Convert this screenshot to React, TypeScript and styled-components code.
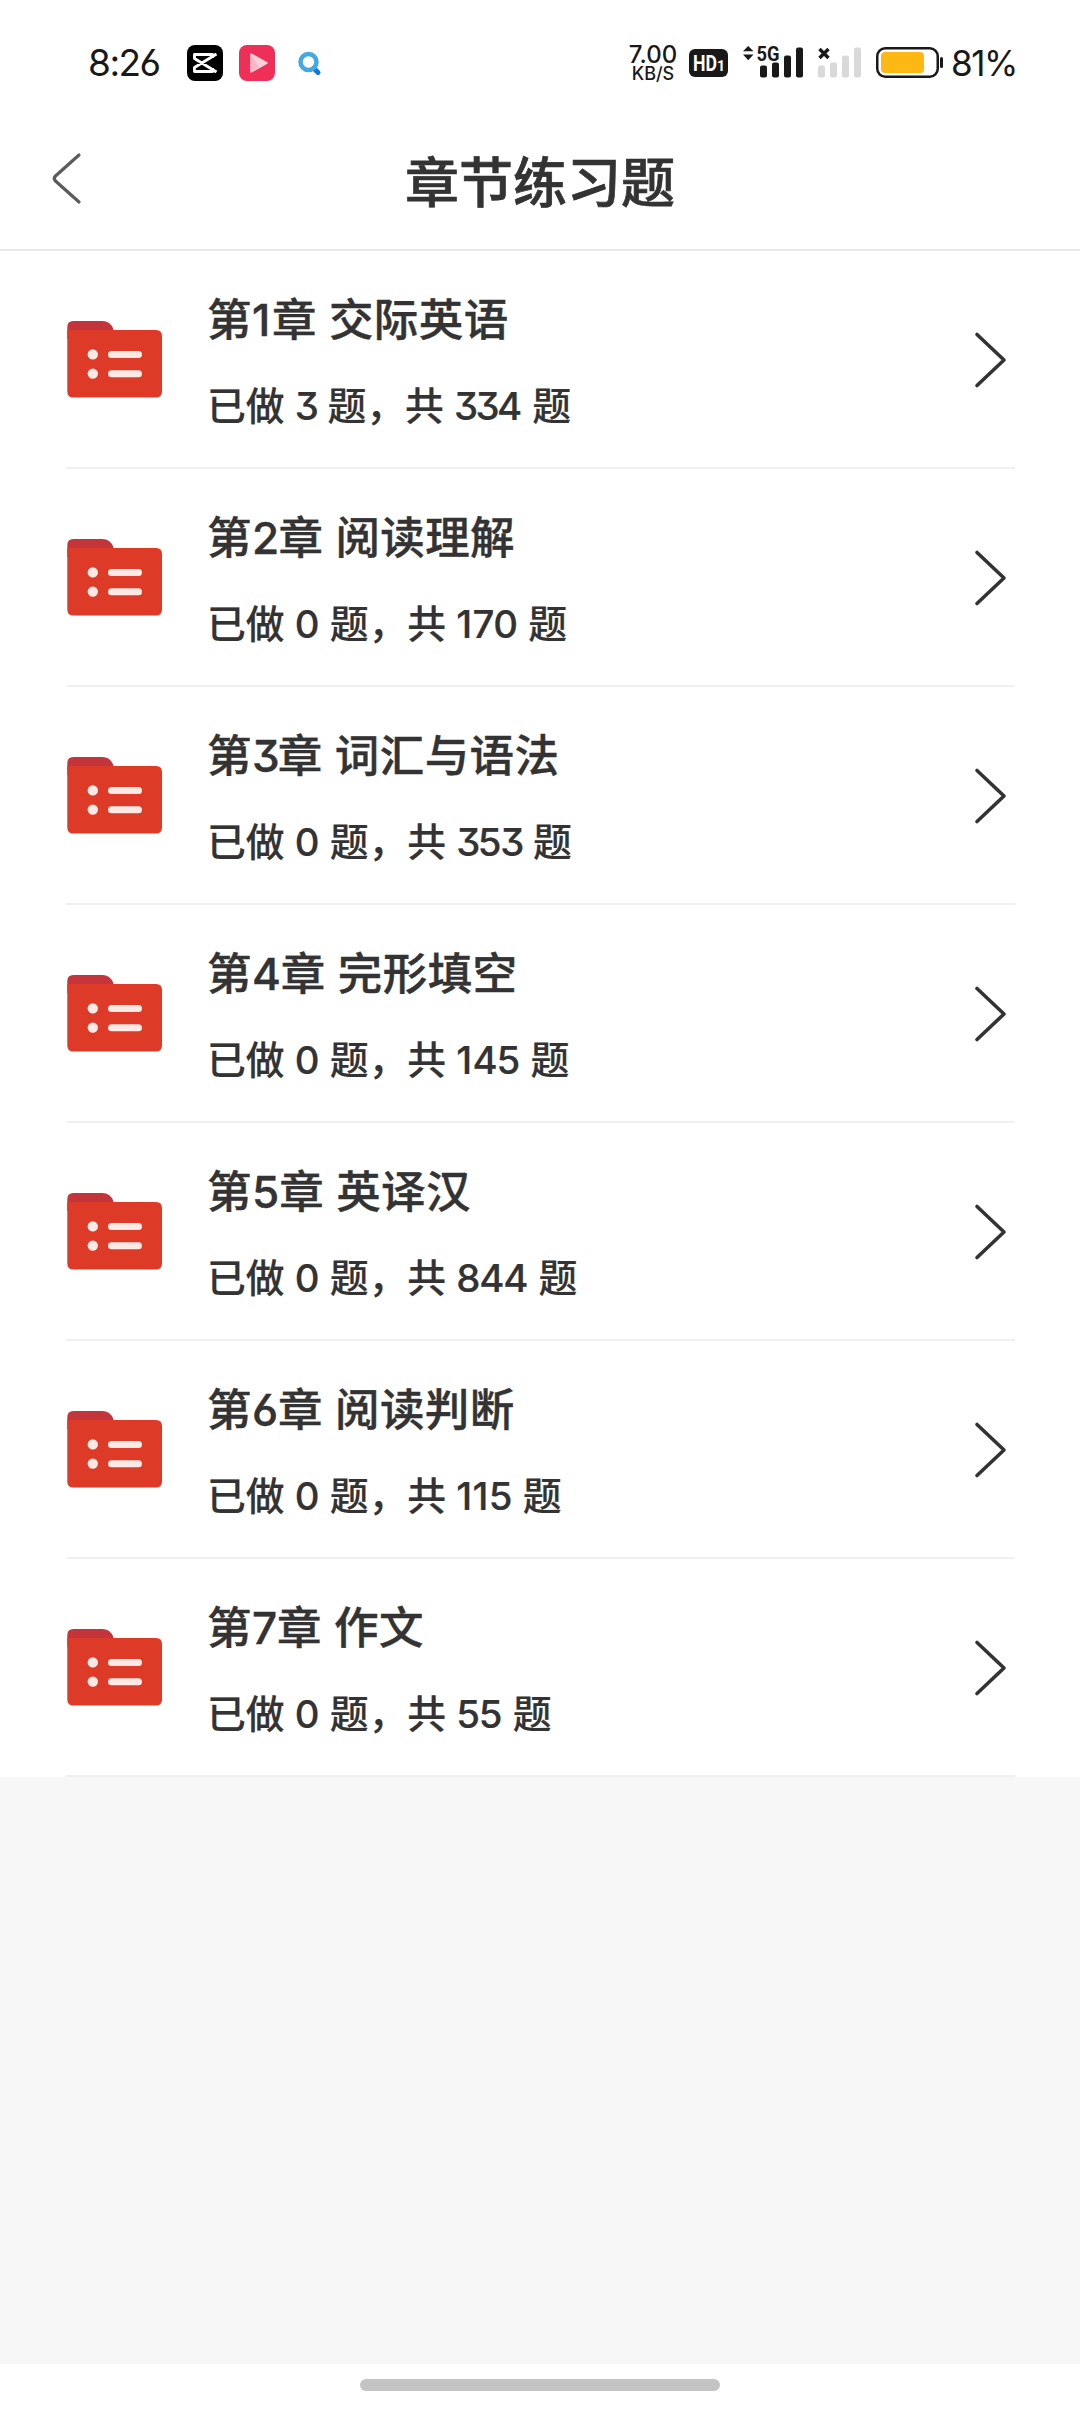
import React from 'react';
import styled, { createGlobalStyle } from 'styled-components';

const Global = createGlobalStyle`
  * { box-sizing: border-box; }
  body { margin: 0; background: #fff; }
`;

const CJK = `'Noto Sans CJK SC', sans-serif`;
const LATIN = `Inter, 'Noto Sans CJK SC', sans-serif`;

const Screen = styled.div`
  width: 1080px;
  height: 2412px;
  display: flex;
  flex-direction: column;
  background: #f7f7f7;
  color: #333;
  font-family: ${CJK};
`;

const StatusBar = styled.div`
  height: 125px;
  padding: 0 64px 0 88px;
  display: flex;
  align-items: center;
  background: #fff;
  color: #191919;
  font-family: ${LATIN};
  flex: none;
`;

const Clock = styled.span`
  width: 98px;
  font-size: 37px;
  line-height: 40px;
  letter-spacing: -1.5px;
  white-space: nowrap;
  font-feature-settings: 'cv03', 'cv09';
`;

const AppIcon = styled.svg<{ $gap: number }>`
  width: 36px;
  height: 36px;
  margin-left: ${(p) => p.$gap}px;
  flex: none;
`;

const Spacer = styled.div`
  flex: 1;
`;

const Speed = styled.div`
  width: 50px;
  margin-right: 11px;
  padding-top: 3px;
  display: flex;
  flex-direction: column;
  align-items: center;
  white-space: nowrap;
`;

const SpeedValue = styled.span`
  font-size: 24px;
  line-height: 19px;
  font-weight: 500;
`;

const SpeedUnit = styled.span`
  font-size: 18px;
  line-height: 19px;
  font-weight: 500;
`;

const HdBadge = styled.svg`
  width: 39px;
  height: 28px;
  margin-right: 13px;
  flex: none;
`;

const Signal = styled.svg<{ $gap?: number }>`
  height: 52px;
  margin-left: ${(p) => p.$gap ?? 0}px;
  flex: none;
`;

const Battery = styled.svg`
  width: 68px;
  height: 34px;
  margin-left: 15px;
  flex: none;
`;

const Percent = styled.span`
  width: 65px;
  margin-left: 7px;
  font-size: 35px;
  line-height: 40px;
  letter-spacing: -1.5px;
  white-space: nowrap;
`;

const Header = styled.header`
  height: 126px;
  padding: 0 46px;
  display: grid;
  grid-template-columns: 40px 1fr 40px;
  align-items: center;
  background: #fff;
  border-bottom: 2px solid #e9e9e9;
  flex: none;
`;

const BackButton = styled.button`
  width: 40px;
  height: 60px;
  padding: 0;
  border: 0;
  background: none;
  margin-bottom: 17px;
`;

const Title = styled.h1`
  margin: 0 0 14px;
  text-align: center;
  font-size: 54px;
  line-height: 70px;
  font-weight: 500;
  -webkit-text-stroke: 0.7px #333;
`;

const List = styled.main`
  background: #fff;
  padding: 0 65px 0 66px;
`;

const Row = styled.section`
  height: 218px;
  border-bottom: 2px solid #f0f0f0;
  display: flex;
  align-items: center;
`;

const Folder = styled.svg`
  width: 98px;
  height: 80px;
  flex: none;
`;

const RowText = styled.div`
  flex: 1;
  margin-left: 43px;
  padding-top: 5px;
  display: flex;
  flex-direction: column;
  gap: 23px;
`;

const Chapter = styled.h2`
  margin: 0;
  font-size: 44.5px;
  line-height: 60px;
  font-weight: 500;
  letter-spacing: 0.4px;
  word-spacing: 1.7px;
  white-space: nowrap;
  -webkit-text-stroke: 0.4px #333;
`;

const Progress = styled.p`
  margin: 0;
  font-size: 38.8px;
  line-height: 60px;
  font-weight: 500;
  word-spacing: 1.4px;
  white-space: nowrap;
  -webkit-text-stroke: 0.2px #333;
`;

const Num = styled.span`
  font-family: ${LATIN};
  font-size: 0.99em;
  margin-right: 0.03em;
  font-kerning: none;
  font-feature-settings: 'cv09', 'cv03';
`;

const Digit = styled.span<{ $tracking: number }>`
  letter-spacing: ${(p) => p.$tracking}em;
`;

const Chevron = styled.svg`
  width: 34px;
  height: 60px;
  margin-right: 8px;
  flex: none;
`;

const Footer = styled.footer`
  height: 48px;
  margin-top: auto;
  padding-top: 15px;
  display: flex;
  justify-content: center;
  background: #fff;
`;

const HomeBar = styled.div`
  width: 360px;
  height: 12px;
  border-radius: 6px;
  background: #c4c4c4;
`;

const chapters = [
  { name: '交际英语', done: 3, total: 334 },
  { name: '阅读理解', done: 0, total: 170 },
  { name: '词汇与语法', done: 0, total: 353 },
  { name: '完形填空', done: 0, total: 145 },
  { name: '英译汉', done: 0, total: 844 },
  { name: '阅读判断', done: 0, total: 115 },
  { name: '作文', done: 0, total: 55 },
];

const tracking: Record<string, number> = { '1': 0.01, '2': -0.045, '3': -0.07 };

const Digits = ({ value }: { value: number }) => (
  <Num>
    {String(value)
      .split('')
      .map((d, i) => (
        <Digit key={i} $tracking={tracking[d] ?? -0.03}>
          {d}
        </Digit>
      ))}
  </Num>
);

const FolderIcon = () => (
  <Folder viewBox="0 0 98 80">
    <path d="M1.300 20V8q0-6 6-6h29q8 0 11 8l2 10Z" fill="#c3353a" />
    <path d="M1.300 11h88.700q6 0 6 6v55.500q0 6-6 6H7.300q-6 0-6-6Z" fill="#de3a28" />
    <g fill="#ffe9e4">
      <circle cx="26.800" cy="35.400" r="5.200" />
      <circle cx="26.800" cy="54.600" r="5.200" />
      <rect x="42" y="32" width="34" height="7" rx="3.500" />
      <rect x="42" y="51.200" width="34" height="7" rx="3.500" />
    </g>
  </Folder>
);

const SignalBars = () => (
  <>
    <rect x="0" y="20.500" width="7" height="12" rx="2" />
    <rect x="12" y="17.500" width="7" height="15" rx="2" />
    <rect x="24" y="10.500" width="7" height="22" rx="2" />
    <rect x="36" y="2.500" width="7" height="30" rx="2" />
  </>
);

export default function App() {
  return (
    <>
      <Global />
      <Screen>
        <StatusBar>
          <Clock>8:26</Clock>
          <AppIcon $gap={1} viewBox="0 0 36 36">
            <rect width="36" height="36" rx="8" fill="#000" />
            <path
              d="M25.500 13V9.500H7.500V13.500L29.500 27M25.500 23V26.500H7.500V22.500L29.500 9"
              fill="none"
              stroke="#fff"
              strokeWidth="2.900"
              strokeLinejoin="round"
            />
          </AppIcon>
          <AppIcon $gap={16} viewBox="0 0 36 36">
            <rect width="36" height="36" rx="8" fill="#ee2f57" />
            <path d="M12 9v18l16-9Z" fill="#ffd3dc" stroke="#ffd3dc" strokeWidth="1.500" strokeLinejoin="round" />
            <path d="M12 9v18l8-5Z" fill="#ffb5c5" />
          </AppIcon>
          <AppIcon $gap={16} viewBox="0 0 36 36">
            <path d="m23 23.500 4 4" stroke="#1473dc" strokeWidth="5" strokeLinecap="round" />
            <circle cx="17.500" cy="17" r="8" fill="none" stroke="#45a8e0" strokeWidth="4.500" />
          </AppIcon>
          <Spacer />
          <Speed>
            <SpeedValue>7.00</SpeedValue>
            <SpeedUnit>KB/S</SpeedUnit>
          </Speed>
          <HdBadge viewBox="0 0 39 28">
            <rect width="39" height="28" rx="6" fill="#191919" />
            <g fill="#fff" fontFamily="Roboto, sans-serif" fontWeight="700">
              <text x="4" y="22" fontSize="22" textLength="24" lengthAdjust="spacingAndGlyphs">HD</text>
              <text x="28" y="22" fontSize="14">1</text>
            </g>
          </HdBadge>
          <Signal width="62" viewBox="0 -8 62 52">
            <path d="M2 6.200 7.200 1 12.500 6.200ZM2 9.500h10.500L7.200 15.200Z" fill="#191919" />
            <text x="15.500" y="15.500" fontFamily="Roboto, sans-serif" fontSize="20.500" fontWeight="700" fill="#191919" textLength="23" lengthAdjust="spacingAndGlyphs">5G</text>
            <g fill="#191919" transform="translate(19 0)">
              <SignalBars />
            </g>
          </Signal>
          <Signal width="46" $gap={12} viewBox="0 -8 46 52">
            <path d="m4.500 4 9 9m0-9-9 9" stroke="#191919" strokeWidth="3.400" />
            <g fill="#d9d9d9" transform="translate(3 0)">
              <SignalBars />
            </g>
          </Signal>
          <Battery viewBox="0 0 68 34">
            <rect x="1.250" y="2.250" width="60.500" height="28.500" rx="8" fill="#fff" stroke="#191919" strokeWidth="2.500" />
            <rect x="5" y="6" width="43" height="21" rx="4" fill="#fdb813" />
            <rect x="64" y="11" width="3" height="11" rx="1.500" fill="#191919" />
          </Battery>
          <Percent>81%</Percent>
        </StatusBar>
        <Header>
          <BackButton aria-label="返回">
            <svg width="40" height="60" viewBox="0 0 40 60">
              <path d="M33 6 9.500 27q-2.500 2.500 0 5L33 53" fill="none" stroke="#5c5c5c" strokeWidth="3.200" strokeLinecap="round" />
            </svg>
          </BackButton>
          <Title>章节练习题</Title>
        </Header>
        <List>
          {chapters.map((c, i) => (
            <Row key={c.name}>
              <FolderIcon />
              <RowText>
                <Chapter>
                  第<Digits value={i + 1} />章 {c.name}
                </Chapter>
                <Progress>
                  已做 <Digits value={c.done} /> 题，共 <Digits value={c.total} /> 题
                </Progress>
              </RowText>
              <Chevron viewBox="0 0 34 60">
                <path d="m4 5.500 27 25.500L4 56.500" fill="none" stroke="#333" strokeWidth="3.600" strokeLinecap="round" strokeLinejoin="round" />
              </Chevron>
            </Row>
          ))}
        </List>
        <Footer>
          <HomeBar />
        </Footer>
      </Screen>
    </>
  );
}
